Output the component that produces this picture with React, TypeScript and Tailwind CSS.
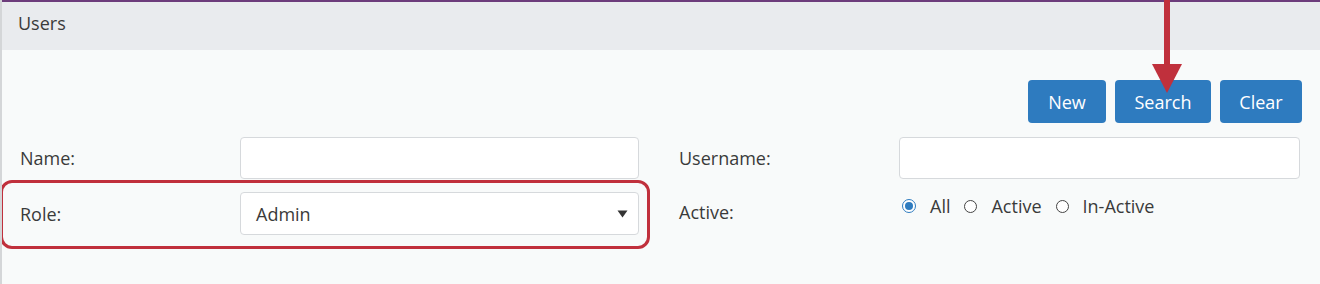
function Radio({ checked, label }: { checked?: boolean; label: string }) {
  return (
    <label className="flex items-center">
      <span
        className={
          checked
            ? 'w-[14px] h-[14px] rounded-full border border-[#2e7bbf] flex items-center justify-center bg-white'
            : 'w-[13px] h-[13px] rounded-full border-[1.5px] border-[#444] bg-white'
        }
      >
        {checked && <span className="w-[8px] h-[8px] rounded-full bg-[#2e7bbf]" />}
      </span>
      <span className="ml-[14px]">{label}</span>
    </label>
  );
}

export default function App() {
  const field = 'h-[42px] bg-white border border-[#d6d9dc] rounded-[4px]';

  return (
    <div
      className="relative w-[1320px] h-[284px] bg-[#f8fafa] text-[#3a3a3a] text-[18px] leading-[24px] border-l-2 border-[#d4d6d8] overflow-hidden"
      style={{ fontFamily: '"Open Sans", "Noto Sans", sans-serif' }}
    >
      <div className="h-[2px] bg-[#6d3d7c]" />
      <div className="h-[48px] bg-[#e9ebee] pl-[16px] pt-[9px]">Users</div>

      <div className="flex justify-end gap-[9px] pr-[18px] mt-[30px]">
        <button className="w-[78px] h-[43px] rounded-[4px] bg-[#2e7bbf] text-white">New</button>
        <button className="w-[96px] h-[43px] rounded-[4px] bg-[#2e7bbf] text-white">Search</button>
        <button className="w-[82px] h-[43px] rounded-[4px] bg-[#2e7bbf] text-white">Clear</button>
      </div>

      <div className="grid grid-cols-[677px_1fr] mt-[14px]">
        <div className="flex items-center pl-[18px]">
          <span className="w-[220px]">Name:</span>
          <div className={`w-[399px] ${field}`} />
        </div>
        <div className="flex items-center">
          <span className="w-[220px]">Username:</span>
          <div className={`w-[401px] ${field}`} />
        </div>

        <div className="relative flex items-center pl-[18px] mt-[13px]">
          <span className="w-[220px]">Role:</span>
          <div className={`w-[399px] h-[43px] ${field} flex items-center justify-between pl-[15px] pr-[10px]`}>
            <span>Admin</span>
            <svg width="11" height="8" viewBox="0 0 11 8">
              <path d="M0.5 0.5 L10.5 0.5 L5.5 7.5 Z" fill="#333" />
            </svg>
          </div>
          <div className="absolute left-[-2px] top-[-12px] w-[650px] h-[69px] border-[3px] border-[#c0303c] rounded-[12px] pointer-events-none" />
        </div>
        <div className="flex items-start mt-[13px]">
          <span className="w-[220px] mt-[8px]">Active:</span>
          <div className="flex items-center gap-[14px] mt-[2px] ml-[3px]">
            <Radio checked label="All" />
            <Radio label="Active" />
            <Radio label="In-Active" />
          </div>
        </div>
      </div>

      {/* annotation arrow */}
      <svg className="absolute left-[1148px] top-0" width="34" height="94" viewBox="0 0 34 94">
        <rect x="14" y="0" width="6" height="66" fill="#c0303c" />
        <path d="M2 64 L32 64 L17 93 Z" fill="#c0303c" />
      </svg>
    </div>
  );
}
